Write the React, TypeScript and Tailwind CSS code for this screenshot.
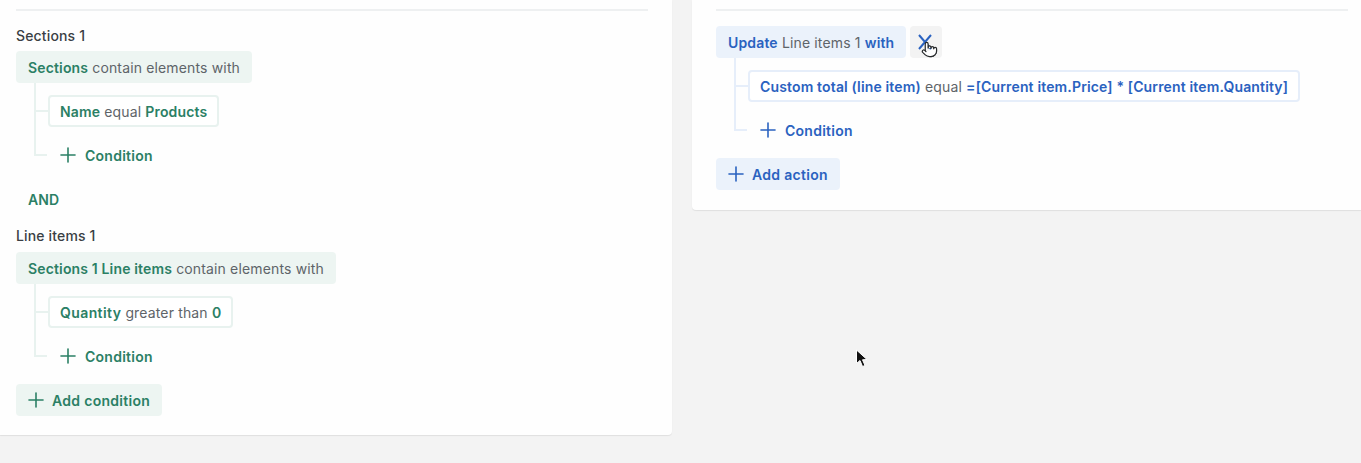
import { Plus, Pointer } from 'lucide-react';
import type { ReactNode } from 'react';

type Tone = 'green' | 'blue';

const toneText = { green: 'text-[#2b8065]', blue: 'text-[#2a62c0]' };
const tonePill = { green: 'bg-[#edf5f2]', blue: 'bg-[#ebf2fb]' };
const toneBorder = { green: 'border-[#e8f2ef]', blue: 'border-[#e6eefa]' };
const toneLine = { green: 'bg-[#e8f2ef]', blue: 'bg-[#e6eefa]' };

function B({ children }: { children: ReactNode }) {
  return <span className="font-semibold">{children}</span>;
}

function Muted({ children }: { children: ReactNode }) {
  return <span className="font-normal text-[#5e6469]">{children}</span>;
}

function Pill({ tone, children }: { tone: Tone; children: ReactNode }) {
  return (
    <div className={`flex h-8 w-fit items-center whitespace-pre rounded-[4px] px-3 ${tonePill[tone]} ${toneText[tone]}`}>
      {children}
    </div>
  );
}

function AddButton({ tone, label }: { tone: Tone; label: string }) {
  return (
    <button type="button" className={`flex h-8 w-fit items-center gap-1 rounded-[4px] pl-2 pr-3 font-semibold tracking-[0.3px] ${tonePill[tone]} ${toneText[tone]}`}>
      <Plus size={24} strokeWidth={1.6} />
      {label}
    </button>
  );
}

// one condition group: header pill, elbow lines, a boxed rule and the "+ Condition" row
function Group({ tone, head, rule, extra }: { tone: Tone; head: ReactNode; rule: ReactNode; extra?: ReactNode }) {
  return (
    <div>
      <div className="flex items-center gap-1">
        <Pill tone={tone}>{head}</Pill>
        {extra}
      </div>
      <div className="relative ml-8 mt-3 flex flex-col gap-3">
        <div className={`absolute -left-[14px] -top-3 h-[73px] w-0.5 ${toneLine[tone]}`} />
        <div className={`absolute -left-[14px] top-[15px] h-0.5 w-[14px] ${toneLine[tone]}`} />
        <div className={`absolute -left-[14px] top-[59px] h-0.5 w-[13px] ${toneLine[tone]}`} />
        <div className={`flex h-8 w-fit items-center whitespace-pre rounded-[4px] border-2 bg-white px-2.5 ${toneBorder[tone]} ${toneText[tone]}`}>
          {rule}
        </div>
        <div className={`flex h-8 items-center gap-[5px] pl-2 font-semibold tracking-[0.25px] ${toneText[tone]}`}>
          <Plus size={24} strokeWidth={1.6} />
          Condition
        </div>
      </div>
    </div>
  );
}

function Heading({ children }: { children: ReactNode }) {
  return <div className="flex h-6 items-center font-medium text-[#3a3f44]">{children}</div>;
}

export default function App() {
  return (
    <div className="relative flex h-[463px] w-[1361px] items-start gap-5 overflow-hidden bg-[#f3f3f3] text-[14px] tracking-[0.15px] font-['Inter',sans-serif]">
      <section className="h-[435px] w-[672px] rounded-br-[4px] bg-[#fefefe] pl-4 pr-6 pt-[9px] shadow-[0_1px_1px_rgba(0,0,0,0.08)]">
        <div className="h-0.5 bg-[#eef0f1]" />
        <div className="mt-3">
          <Heading>Sections 1</Heading>
          <div className="mt-1">
            <Group
              tone="green"
              head={<><B>Sections</B><Muted> contain elements with</Muted></>}
              rule={<><B>Name</B><Muted> equal </Muted><B>Products</B></>}
            />
          </div>
          <div className="mt-3 flex h-8 items-center pl-3 font-semibold text-[#2b8065]">AND</div>
          <div className="mt-2">
            <Heading>Line items 1</Heading>
          </div>
          <div className="mt-[5px]">
            <Group
              tone="green"
              head={<><B>Sections 1 Line items</B><Muted> contain elements with</Muted></>}
              rule={<><span className="font-semibold tracking-[0.4px]">Quantity</span><Muted> greater than </Muted><B>0</B></>}
            />
          </div>
          <div className="mt-3">
            <AddButton tone="green" label="Add condition" />
          </div>
        </div>
      </section>

      <section className="h-[210px] flex-1 rounded-bl-[4px] bg-[#fefefe] pl-6 pr-[13px] pt-[9px] shadow-[0_1px_1px_rgba(0,0,0,0.08)]">
        <div className="h-0.5 bg-[#eef0f1]" />
        <div className="mt-[15px]">
          <Group
            tone="blue"
            head={<><B>Update</B><Muted> Line items 1 </Muted><B>with</B></>}
            rule={<><B>Custom total (line item)</B><Muted> equal </Muted><B>=[Current item.Price] * [Current item.Quantity]</B></>}
            extra={
              <div className="relative flex h-8 w-8 items-center justify-center rounded-[4px] bg-[#f3f3f3]">
                <svg width="14" height="16" viewBox="0 0 14 16" fill="none" stroke="#2a62c0" strokeWidth="2" className="-translate-x-px">
                  <path d="M1 1 L13 15 M13 1 L1 15" />
                </svg>
                <Pointer size={17} strokeWidth={1.7} fill="#ffffff" className="absolute left-[11px] top-[15px] text-[#26292b]" />
              </div>
            }
          />
          <div className="mt-3">
            <AddButton tone="blue" label="Add action" />
          </div>
        </div>
      </section>

      <svg width="14" height="20" viewBox="0 0 14 20" className="absolute left-[855px] top-[349px]">
        <path d="M1.5 1 L1.5 14.5 L5 11.5 L7.5 17.5 L10 16.5 L7.5 10.8 L12 10.5 Z" fill="#111111" stroke="#ffffff" strokeWidth="1" />
      </svg>
    </div>
  );
}
